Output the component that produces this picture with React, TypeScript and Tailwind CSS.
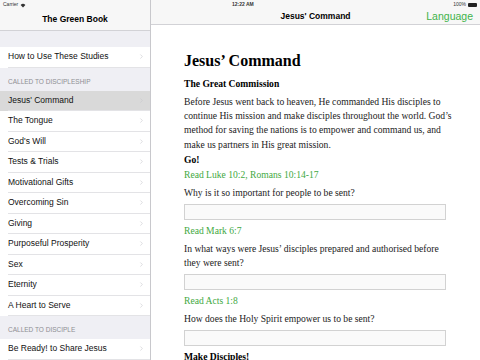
import { ChevronRight } from "lucide-react";

const sans = "font-['Helvetica_Neue','Liberation_Sans',Arial,sans-serif]";
const serif = "font-['Palatino_Linotype','Liberation_Serif',serif]";

const studies = [
  "Jesus' Command",
  "The Tongue",
  "God's Will",
  "Tests & Trials",
  "Motivational Gifts",
  "Overcoming Sin",
  "Giving",
  "Purposeful Prosperity",
  "Sex",
  "Eternity",
  "A Heart to Serve",
];

function Row({ label, selected }: { label: string; selected?: boolean }) {
  return (
    <div className={`h-[20.5px] pl-2 flex items-center ${selected ? "bg-[#d9d9d9]" : "bg-white"}`}>
      <div className="flex-1 h-full flex items-center pr-[5px] border-b border-[#e3e3e6]">
        <span className="flex-1 text-[8.5px] text-[#111]">{label}</span>
        <ChevronRight className="w-[7px] h-[7px] text-[#c7c7cc]" strokeWidth={2} />
      </div>
    </div>
  );
}

function Section({ title }: { title: string }) {
  return (
    <div className="h-[23px] pl-2 pb-[4px] flex items-end text-[6.5px] text-[#8e8e93] uppercase">
      {title}
    </div>
  );
}

function Answer() {
  return <div className="h-4 w-[262px] bg-[#fafafa] border border-[#d2d2d2] mt-[4px] mb-[4px]" />;
}

function Read({ children }: { children: string }) {
  return <div className="text-[#3fa93f] text-[9.6px] leading-[14px] mt-[1px] mb-[4px]">{children}</div>;
}

function Question({ children }: { children: string }) {
  return <div className="w-[262px] text-[9.6px] leading-[14px] text-[#222]">{children}</div>;
}

export default function App() {
  return (
    <div className={`w-[480px] h-[360px] overflow-hidden flex bg-white ${sans}`}>
      <div className="w-[151px] shrink-0 bg-[#efeff4] border-r border-[#c8c8cc] flex flex-col">
        <div className="h-[31px] bg-[#f7f7f7] border-b border-[#d2d2d6] flex flex-col">
          <div className="h-[10px] pl-[3px] flex items-center gap-[2px] text-[5px] text-[#333]">
            Carrier
            <svg width="6" height="5" viewBox="0 0 10 8">
              <path d="M5 7.5 L1 3 A6 6 0 0 1 9 3 Z" fill="#333" />
            </svg>
          </div>
          <div className="flex-1 flex items-center justify-center text-[8.5px] font-semibold text-black pb-[1px]">
            The Green Book
          </div>
        </div>
        <div className="h-[16px]" />
        <Row label="How to Use These Studies" />
        <Section title="Called to Discipleship" />
        {studies.map((s, i) => (
          <Row key={s} label={s} selected={i === 0} />
        ))}
        <Section title="Called to Disciple" />
        <Row label="Be Ready! to Share Jesus" />
      </div>

      <div className="flex-1 flex flex-col">
        <div className="h-[31px] bg-[#f7f7f7] border-b border-[#d2d2d6] flex flex-col">
          <div className="h-[10px] relative flex items-center text-[5px] text-[#333]">
            <span className="absolute left-[81px] font-semibold">12:22 AM</span>
            <span className="absolute right-[3px] flex items-center gap-[2px]">
              100%
              <span className="w-[9px] h-[4px] bg-[#222] rounded-[1px]" />
            </span>
          </div>
          <div className="flex-1 flex items-center pb-[1px] relative">
            <span className="flex-1 text-center text-[8.5px] font-semibold text-black">Jesus' Command</span>
            <span className="absolute right-[7px] text-[10.5px] text-[#3fb34a]">Language</span>
          </div>
        </div>
        <div className={`pl-[33px] pt-[26px] w-[310px] ${serif} text-[#222]`}>
          <h1 className="text-[16px] leading-[20px] font-bold text-black">Jesus’ Command</h1>
          <div className="text-[9.6px] leading-[14px] font-bold mt-[6px] mb-[4px] text-black">The Great Commission</div>
          <p className="text-[9.6px] leading-[14.3px] w-[272px]">
            Before Jesus went back to heaven, He commanded His disciples to continue His mission and make
            disciples throughout the world. God’s method for saving the nations is to empower and command us,
            and make us partners in His great mission.
          </p>
          <div className="text-[9.6px] leading-[14px] font-bold mt-[1px] text-black">Go!</div>
          <Read>Read Luke 10:2, Romans 10:14-17</Read>
          <Question>Why is it so important for people to be sent?</Question>
          <Answer />
          <Read>Read Mark 6:7</Read>
          <Question>In what ways were Jesus’ disciples prepared and authorised before they were sent?</Question>
          <Answer />
          <Read>Read Acts 1:8</Read>
          <Question>How does the Holy Spirit empower us to be sent?</Question>
          <Answer />
          <div className="text-[9.6px] leading-[14px] font-bold mt-[4px] text-black">Make Disciples!</div>
        </div>
      </div>
    </div>
  );
}
